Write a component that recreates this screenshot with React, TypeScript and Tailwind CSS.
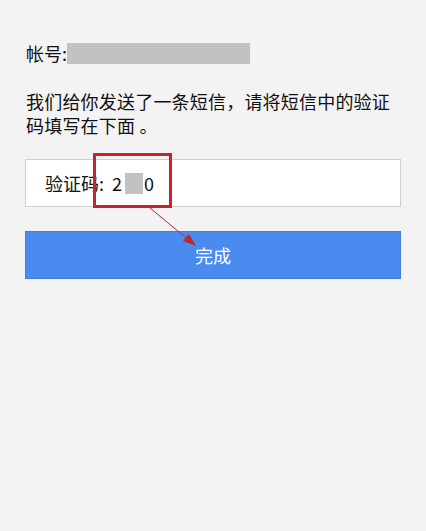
import React from "react";

const font = { fontFamily: '"Noto Sans CJK SC", "Liberation Sans", sans-serif' };

export default function App() {
  return (
    <div
      className="relative min-h-[531px] w-[426px] bg-[#f3f3f3] px-[25px] pt-[41px] text-[#111]"
      style={font}
    >
      {/* account */}
      <div className="flex h-[24px] items-center pl-px text-[18px] leading-[24px]">
        <span>帐号:</span>
        <span className="h-[21px] w-[183px] bg-[#c2c2c2]" />
      </div>

      {/* message */}
      <p className="mt-[24px] pl-px text-[18px] leading-[24px] tracking-[0.2px]">
        我们给你发送了一条短信，请将短信中的验证
        <br />
        码填写在下面 。
      </p>

      {/* code input */}
      <div className="mt-[22px] flex h-[48px] items-center border border-[#d0d0d0] bg-white pl-[19px] text-[18px]">
        <span>验证码:</span>
        <span className="ml-[8px]">2</span>
        <span className="ml-[3px] h-[21px] w-[18px] bg-[#c2c2c2]" />
        <span className="ml-[1px]">0</span>
      </div>

      {/* submit */}
      <button className="mt-[24px] flex h-[48px] w-full items-center justify-center border border-[#3f7ee0] bg-[#4a8bef] text-[18px] text-white">
        完成
      </button>

      {/* annotation */}
      <div className="absolute left-[93px] top-[153px] h-[55px] w-[79px] border-[3px] border-[#c3252b]" />
      <svg className="absolute left-0 top-0" width="426" height="531" viewBox="0 0 426 531">
        <line x1="150" y1="208" x2="190" y2="241" stroke="#c3252b" strokeWidth="1" />
        <polygon points="196,246 183,241 189,234" fill="#c3252b" />
      </svg>
    </div>
  );
}
